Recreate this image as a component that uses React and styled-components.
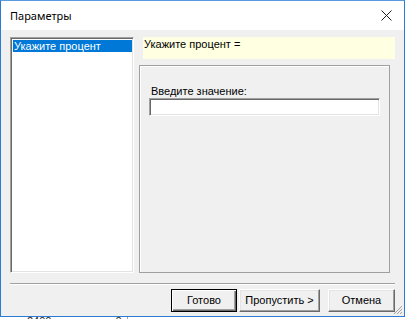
import React from 'react';
import styled, { createGlobalStyle } from 'styled-components';

const GlobalStyle = createGlobalStyle`
  html, body {
    margin: 0;
    padding: 0;
    background: #ffffff;
  }
  body {
    font-family: "Liberation Sans", Arial, sans-serif;
    font-size: 11px;
    color: #000;
    overflow: hidden;
  }
`;

const Desktop = styled.div`
  width: 406px;
  height: 319px;
  display: flex;
  flex-direction: column;
  overflow: hidden;
`;

const Window = styled.div`
  width: 405px;
  height: 317px;
  box-sizing: border-box;
  border: 1px solid #2b7bd4;
  border-top-color: #5a9ae0;
  background: #f0f0f0;
  display: flex;
  flex-direction: column;
  position: relative;
`;

const TitleBar = styled.div`
  height: 29px;
  background: #ffffff;
  display: flex;
  align-items: center;
  justify-content: space-between;
  padding: 0 12px 0 9px;
`;

const Title = styled.span`
  font-family: "Noto Sans", "Liberation Sans", sans-serif;
  font-size: 11px;
  color: #000;
  margin-top: -1px;
`;

const CloseIcon = styled.svg`
  width: 11px;
  height: 11px;
  display: block;
`;

const Body = styled.div`
  flex: 1;
  display: flex;
  flex-direction: column;
  padding: 7px 9px 0 9px;
`;

const MainRow = styled.div`
  display: flex;
  gap: 5px;
  height: 236px;
`;

const ListBox = styled.div`
  width: 124px;
  box-sizing: border-box;
  background: #fff;
  border-top: 1px solid #a0a0a0;
  border-left: 1px solid #a0a0a0;
  border-right: 1px solid #ffffff;
  border-bottom: 1px solid #ffffff;
  box-shadow: inset 1px 1px 0 #696969, inset -1px -1px 0 #e3e3e3;
  padding: 2px 1px 2px 2px;
`;

const ListItem = styled.div`
  height: 12px;
  line-height: 12px;
  padding-left: 1px;
  background: ${p => (p.selected ? '#0078d7' : 'transparent')};
  color: ${p => (p.selected ? '#ffffff' : '#000000')};
  white-space: nowrap;
`;

const RightColumn = styled.div`
  flex: 1;
  display: flex;
  flex-direction: column;
  gap: 6px;
`;

const Prompt = styled.div`
  height: 22px;
  margin-left: 4px;
  background: #ffffe1;
  display: flex;
  align-items: center;
  padding-left: 1px;
  padding-bottom: 8px;
  box-sizing: border-box;
`;

const GroupPanel = styled.div`
  flex: 1;
  margin-right: 5px;
  border: 1px solid #a0a0a0;
  box-shadow: inset 1px 1px 0 #ffffff;
  padding: 19px 9px 0 9px;
  display: flex;
  flex-direction: column;
`;

const FieldLabel = styled.label`
  margin-left: 2px;
  line-height: 13px;
`;

const TextField = styled.div`
  height: 18px;
  box-sizing: border-box;
  background: #fff;
  border-top: 1px solid #a0a0a0;
  border-left: 1px solid #a0a0a0;
  border-right: 1px solid #ffffff;
  border-bottom: 1px solid #ffffff;
  box-shadow: inset 1px 1px 0 #696969, inset -1px -1px 0 #e3e3e3;
`;

const Separator = styled.div`
  margin-top: 10px;
  height: 1px;
  background: #a0a0a0;
  border-bottom: 1px solid #ffffff;
`;

const ButtonRow = styled.div`
  display: flex;
  justify-content: flex-end;
  margin-top: 4px;
`;

const Button = styled.button`
  flex: none;
  height: 23px;
  width: ${p => p.width}px;
  margin-left: ${p => p.gap || 0}px;
  box-sizing: border-box;
  font-family: inherit;
  font-size: 11px;
  color: #000;
  background: #f0f0f0;
  padding: 0 0 1px 0;
  border-top: 1px solid #ffffff;
  border-left: 1px solid #ffffff;
  border-right: 1px solid #696969;
  border-bottom: 1px solid #696969;
  box-shadow: inset -1px -1px 0 #a0a0a0, inset 1px 1px 0 #e3e3e3;
  ${p => p.primary && 'border: 1px solid #000; box-shadow: inset 1px 1px 0 #fff, inset -1px -1px 0 #696969, inset -2px -2px 0 #a0a0a0;'}
`;

const Grip = styled.svg`
  position: absolute;
  right: 1px;
  bottom: 1px;
  width: 11px;
  height: 11px;
`;

const BehindStrip = styled.div`
  height: 2px;
  overflow: hidden;
  display: flex;
`;

const BehindText = styled.span`
  font-size: 11px;
  line-height: 11px;
  margin-top: -1px;
  margin-left: ${p => p.left}px;
  color: #222;
`;

const BehindLine = styled.div`
  width: 1px;
  margin-left: 5px;
  background: #a0a0a0;
`;

export default function App() {
  return (
    <Desktop>
      <GlobalStyle />
      <Window>
        <TitleBar>
          <Title>Параметры</Title>
          <CloseIcon viewBox="0 0 11 11">
            <path d="M0.5 0.5 L10.5 10.5 M10.5 0.5 L0.5 10.5" stroke="#222" strokeWidth="1" />
          </CloseIcon>
        </TitleBar>
        <Body>
          <MainRow>
            <ListBox>
              <ListItem selected>Укажите процент</ListItem>
            </ListBox>
            <RightColumn>
              <Prompt>Укажите процент =</Prompt>
              <GroupPanel>
                <FieldLabel>Введите значение:</FieldLabel>
                <TextField />
              </GroupPanel>
            </RightColumn>
          </MainRow>
          <Separator />
          <ButtonRow>
            <Button width={66} primary>Готово</Button>
            <Button width={81} gap={2}>Пропустить &gt;</Button>
            <Button width={67} gap={8}>Отмена</Button>
          </ButtonRow>
        </Body>
        <Grip viewBox="0 0 11 11">
          <path d="M10 2 L2 10 M10 5 L5 10 M10 8 L8 10" stroke="#a0a0a0" strokeWidth="1" />
        </Grip>
      </Window>
      <BehindStrip>
        <BehindText left={27}>2400</BehindText>
        <BehindText left={64}>0</BehindText>
        <BehindLine />
      </BehindStrip>
    </Desktop>
  );
}
